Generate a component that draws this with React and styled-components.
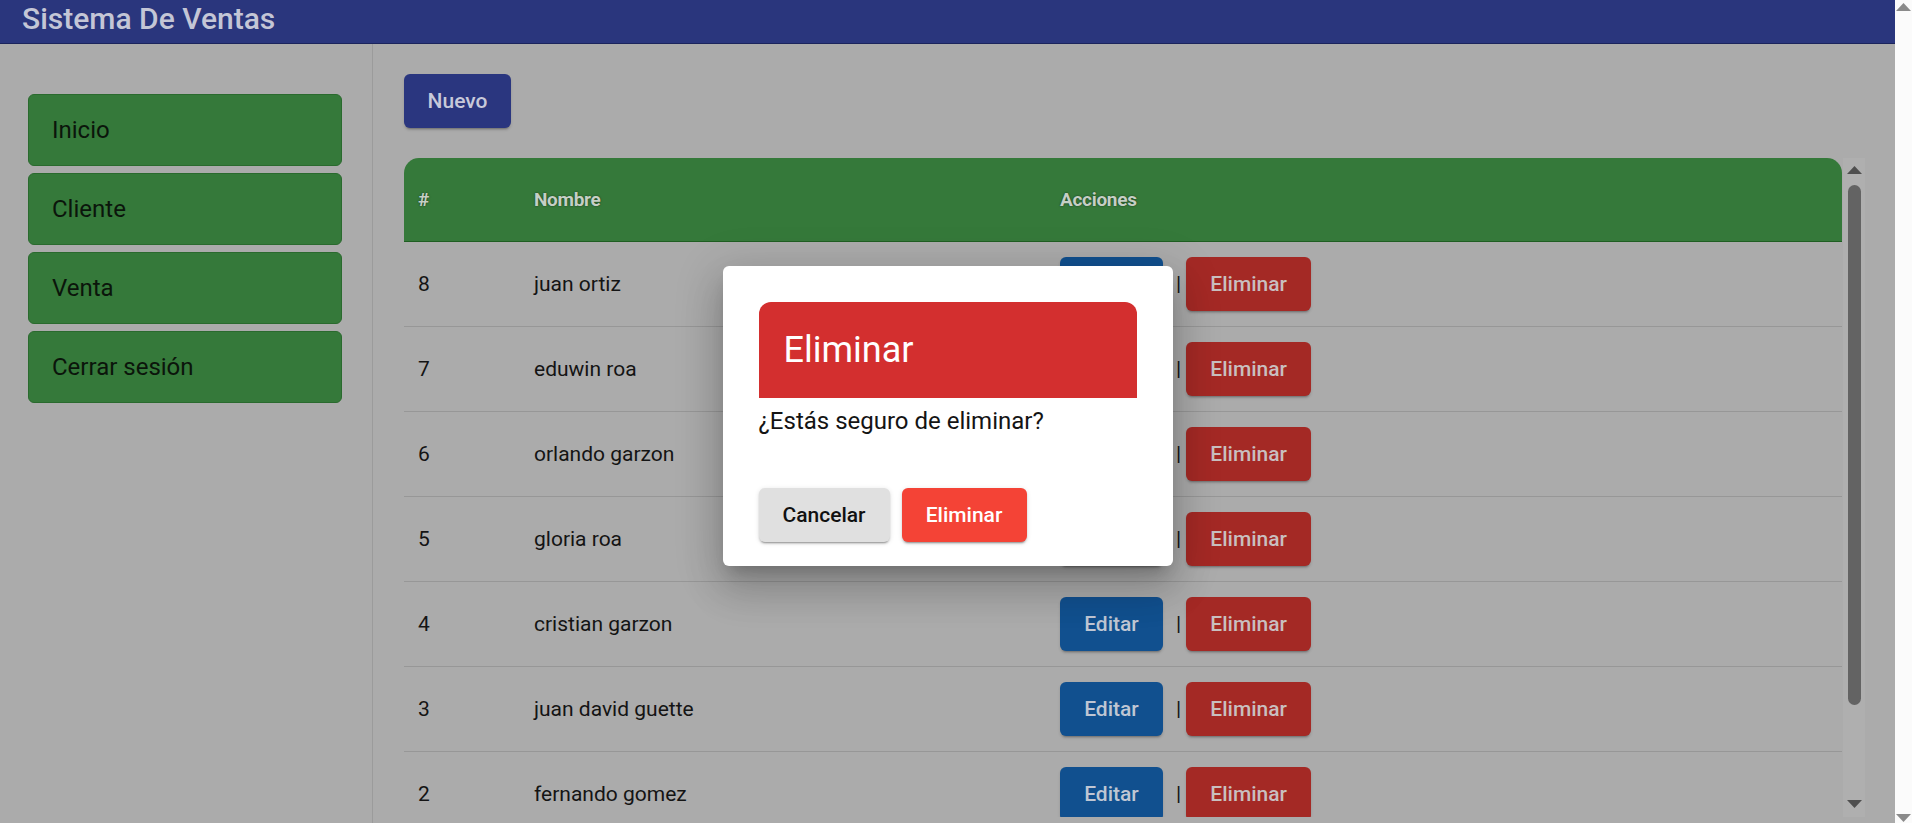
import styled, { createGlobalStyle } from "styled-components";

const GlobalStyle = createGlobalStyle`
  html, body {
    margin: 0;
    padding: 0;
    overflow: hidden;
  }
  body {
    font-family: Roboto, "Noto Sans", Arial, sans-serif;
  }
  * {
    box-sizing: border-box;
  }
`;

const navItems = ["Inicio", "Cliente", "Venta", "Cerrar sesión"];

const clients = [
  { id: 8, name: "juan ortiz" },
  { id: 7, name: "eduwin roa" },
  { id: 6, name: "orlando garzon" },
  { id: 5, name: "gloria roa" },
  { id: 4, name: "cristian garzon" },
  { id: 3, name: "juan david guette" },
  { id: 2, name: "fernando gomez" },
  { id: 1, name: "maria lopez" },
];

function Arrow({ down, color = "#555" }) {
  return (
    <svg width="15" height="8" viewBox="0 0 15 8">
      <polygon
        points={down ? "0,0 15,0 7.5,8" : "7.5,0 15,8 0,8"}
        fill={color}
      />
    </svg>
  );
}

export default function App() {
  return (
    <>
      <GlobalStyle />
      <Screen>
        <Page>
          <TopBar>
            <Title>Sistema De Ventas</Title>
          </TopBar>
          <Body>
            <Sidebar>
              {navItems.map((item) => (
                <NavItem key={item}>{item}</NavItem>
              ))}
            </Sidebar>
            <Main>
              <NewButton>Nuevo</NewButton>
              <TableArea>
                <TableBox>
                  <HeadRow>
                    <HeadCell>#</HeadCell>
                    <HeadCell>Nombre</HeadCell>
                    <HeadCell>Acciones</HeadCell>
                  </HeadRow>
                  {clients.map((c) => (
                    <Row key={c.id}>
                      <Cell>{c.id}</Cell>
                      <Cell>{c.name}</Cell>
                      <Actions>
                        <ActionButton $tone="edit">Editar</ActionButton>
                        <Separator>|</Separator>
                        <ActionButton $tone="delete">Eliminar</ActionButton>
                      </Actions>
                    </Row>
                  ))}
                </TableBox>
                <Scrollbar>
                  <Arrow color="#4f4f4f" />
                  <ScrollTrack>
                    <ScrollThumb />
                  </ScrollTrack>
                  <Arrow down color="#4f4f4f" />
                </Scrollbar>
              </TableArea>
            </Main>
          </Body>
          <DialogLayer>
            <Dialog>
              <DialogTitle>Eliminar</DialogTitle>
              <DialogText>¿Estás seguro de eliminar?</DialogText>
              <DialogActions>
                <DialogButton $variant="cancel">Cancelar</DialogButton>
                <DialogButton $variant="danger">Eliminar</DialogButton>
              </DialogActions>
            </Dialog>
          </DialogLayer>
        </Page>
        <PageScroll>
          <Arrow color="#8a8a8a" />
          <Arrow down color="#8a8a8a" />
        </PageScroll>
      </Screen>
    </>
  );
}

const Screen = styled.div`
  display: flex;
  width: 100vw;
  height: 823px;
`;

const Page = styled.div`
  position: relative;
  flex: 1;
  display: flex;
  flex-direction: column;
  background-color: #ababab;
  overflow: hidden;
`;

const TopBar = styled.header`
  height: 44px;
  flex-shrink: 0;
  background-color: #2a367d;
  border-bottom: 1px solid #1b245c;
  padding: 1px 0 0 22px;
`;

const Title = styled.h1`
  margin: 0;
  font-size: 30px;
  line-height: 36px;
  font-weight: 500;
  color: #c4c6d6;
`;

const Body = styled.div`
  flex: 1;
  display: flex;
  min-height: 0;
`;

const Sidebar = styled.nav`
  width: 373px;
  flex-shrink: 0;
  border-right: 1px solid #9b9b9b;
  padding: 50px 30px 0 28px;
  display: flex;
  flex-direction: column;
  gap: 7px;
`;

const NavItem = styled.div`
  height: 72px;
  display: flex;
  align-items: center;
  padding-left: 23px;
  background-color: #35793a;
  border: 1px solid #2a6a2e;
  border-radius: 6px;
  font-size: 24px;
  color: #0b150b;
`;

const Main = styled.main`
  flex: 1;
  display: flex;
  flex-direction: column;
  padding: 30px 30px 6px 31px;
  min-width: 0;
`;

const NewButton = styled.button`
  align-self: flex-start;
  width: 107px;
  height: 54px;
  border: none;
  border-radius: 6px;
  background-color: #2a367f;
  color: #c7c9da;
  font-family: inherit;
  font-size: 21px;
  font-weight: 500;
  box-shadow: 0 3px 2px -2px rgba(0, 0, 0, 0.25), 0 2px 3px rgba(0, 0, 0, 0.12);
`;

const TableArea = styled.div`
  flex: 1;
  min-height: 0;
  margin-top: 30px;
  display: flex;
`;

const TableBox = styled.div`
  flex: 1;
  overflow: hidden;
  border-radius: 15px 15px 0 0;
`;

const gridColumns = "116px 526px 1fr";

const HeadRow = styled.div`
  display: grid;
  grid-template-columns: ${gridColumns};
  align-items: center;
  height: 84px;
  background-color: #35793a;
  border-bottom: 1px solid #1f5e22;
`;

const HeadCell = styled.div`
  padding-left: 14px;
  font-size: 19px;
  font-weight: 700;
  letter-spacing: -0.3px;
  color: #c5cfc5;
  text-shadow: 0 0 2px rgba(0, 0, 0, 0.6);
`;

const Row = styled.div`
  display: grid;
  grid-template-columns: ${gridColumns};
  align-items: center;
  height: 85px;
  border-bottom: 1px solid #979797;
`;

const Cell = styled.div`
  padding-left: 14px;
  font-size: 21px;
  color: #141414;
`;

const Actions = styled.div`
  display: flex;
  align-items: center;
  padding-left: 14px;
`;

const ActionButton = styled.button`
  height: 54px;
  width: ${(props) => (props.$tone === "edit" ? "103px" : "125px")};
  border: none;
  border-radius: 6px;
  font-family: inherit;
  font-size: 21px;
  font-weight: 500;
  background-color: ${(props) =>
    props.$tone === "edit" ? "#11508f" : "#a42925"};
  color: ${(props) => (props.$tone === "edit" ? "#bfc6d3" : "#c9bfbf")};
  box-shadow: 0 3px 2px -2px rgba(0, 0, 0, 0.25), 0 2px 3px rgba(0, 0, 0, 0.12);
`;

const Separator = styled.span`
  margin: 0 5px 0 13px;
  font-size: 21px;
  color: #141414;
`;

const Scrollbar = styled.div`
  width: 22px;
  margin-left: 1px;
  background-color: #afafaf;
  display: flex;
  flex-direction: column;
  align-items: center;
  padding: 8px 0 9px;
`;

const ScrollTrack = styled.div`
  flex: 1;
  width: 100%;
  display: flex;
  justify-content: center;
  padding: 11px 0 95px;
`;

const ScrollThumb = styled.div`
  width: 13px;
  height: 100%;
  border-radius: 7px;
  background-color: #636363;
`;

const PageScroll = styled.div`
  width: 17px;
  flex-shrink: 0;
  background-color: #fbfbfb;
  display: flex;
  flex-direction: column;
  justify-content: space-between;
  align-items: center;
  padding: 3px 0 1px;
`;

const DialogLayer = styled.div`
  position: absolute;
  inset: 0;
  padding-top: 8px;
  display: flex;
  align-items: center;
  justify-content: center;
`;

const Dialog = styled.div`
  width: 450px;
  height: 300px;
  background-color: #fff;
  border-radius: 6px;
  padding: 36px 36px 24px;
  display: flex;
  flex-direction: column;
  box-shadow: 0 11px 15px -7px rgba(0, 0, 0, 0.2),
    0 24px 38px 3px rgba(0, 0, 0, 0.14), 0 9px 46px 8px rgba(0, 0, 0, 0.12);
`;

const DialogTitle = styled.h2`
  margin: 0;
  height: 96px;
  display: flex;
  align-items: center;
  padding-left: 25px;
  background-color: #d32f2f;
  border-radius: 12px 12px 0 0;
  color: #fff;
  font-size: 36px;
  font-weight: 400;
`;

const DialogText = styled.p`
  margin: 7px 0 0;
  font-size: 24px;
  line-height: 32px;
  color: #141414;
`;

const DialogActions = styled.div`
  margin-top: auto;
  display: flex;
  gap: 12px;
`;

const DialogButton = styled.button`
  height: 54px;
  width: ${(props) => (props.$variant === "cancel" ? "131px" : "125px")};
  border: none;
  border-radius: 6px;
  font-family: inherit;
  font-size: 21px;
  font-weight: 500;
  background-color: ${(props) =>
    props.$variant === "cancel" ? "#e0e0e0" : "#f44336"};
  color: ${(props) => (props.$variant === "cancel" ? "#111" : "#fff")};
  box-shadow: 0 3px 1px -2px rgba(0, 0, 0, 0.2), 0 2px 2px rgba(0, 0, 0, 0.14),
    0 1px 5px rgba(0, 0, 0, 0.12);
`;
